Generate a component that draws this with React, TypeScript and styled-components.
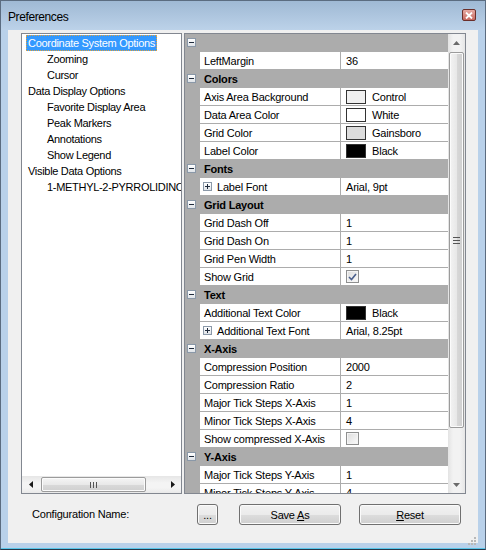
import React from "react";
import styled, { createGlobalStyle } from "styled-components";

type GridRow =
  | { kind: "cat"; name: string }
  | {
      kind: "prop";
      name: string;
      value?: string;
      swatch?: string;
      check?: boolean;
      expand?: boolean;
    };

const ROWS: GridRow[] = [
  { kind: "cat", name: "" },
  { kind: "prop", name: "LeftMargin", value: "36" },
  { kind: "cat", name: "Colors" },
  { kind: "prop", name: "Axis Area Background", swatch: "#f0f0f0", value: "Control" },
  { kind: "prop", name: "Data Area Color", swatch: "#ffffff", value: "White" },
  { kind: "prop", name: "Grid Color", swatch: "#dcdcdc", value: "Gainsboro" },
  { kind: "prop", name: "Label Color", swatch: "#000000", value: "Black" },
  { kind: "cat", name: "Fonts" },
  { kind: "prop", name: "Label Font", expand: true, value: "Arial, 9pt" },
  { kind: "cat", name: "Grid Layout" },
  { kind: "prop", name: "Grid Dash Off", value: "1" },
  { kind: "prop", name: "Grid Dash On", value: "1" },
  { kind: "prop", name: "Grid Pen Width", value: "1" },
  { kind: "prop", name: "Show Grid", check: true },
  { kind: "cat", name: "Text" },
  { kind: "prop", name: "Additional Text Color", swatch: "#000000", value: "Black" },
  { kind: "prop", name: "Additional Text Font", expand: true, value: "Arial, 8.25pt" },
  { kind: "cat", name: "X-Axis" },
  { kind: "prop", name: "Compression Position", value: "2000" },
  { kind: "prop", name: "Compression Ratio", value: "2" },
  { kind: "prop", name: "Major Tick Steps X-Axis", value: "1" },
  { kind: "prop", name: "Minor Tick Steps X-Axis", value: "4" },
  { kind: "prop", name: "Show compressed X-Axis", check: false },
  { kind: "cat", name: "Y-Axis" },
  { kind: "prop", name: "Major Tick Steps Y-Axis", value: "1" },
  { kind: "prop", name: "Minor Tick Steps Y-Axis", value: "4" },
];

const TREE = [
  { label: "Coordinate System Options", level: 0, selected: true },
  { label: "Zooming", level: 1 },
  { label: "Cursor", level: 1 },
  { label: "Data Display Options", level: 0 },
  { label: "Favorite Display Area", level: 1 },
  { label: "Peak Markers", level: 1 },
  { label: "Annotations", level: 1 },
  { label: "Show Legend", level: 1 },
  { label: "Visible Data Options", level: 0 },
  { label: "1-METHYL-2-PYRROLIDINONE", level: 1 },
];

const GlobalStyle = createGlobalStyle`
  html, body {
    margin: 0;
    padding: 0;
    background: #ffffff;
  }
  body {
    font-family: "Liberation Sans", Arial, sans-serif;
  }
  * {
    box-sizing: border-box;
  }
`;

const Window = styled.div`
  width: 486px;
  height: 550px;
  display: flex;
  flex-direction: column;
  border: 1px solid #5b6c80;
  border-bottom-color: #26384a;
  background: linear-gradient(to bottom, #9fb9d4 0px, #bcd2e9 29px, #b9d1ea 29px);
  padding: 0 7px 6px;
  box-shadow: inset 0 -1px 0 #58c6ea;
`;

const TitleBar = styled.div`
  height: 29px;
  display: flex;
  align-items: center;
  justify-content: space-between;
  padding-top: 2px;
`;

const Title = styled.span`
  font-size: 12px;
  letter-spacing: -0.4px;
  color: #000000;
`;

const CloseButton = styled.span`
  width: 14px;
  height: 12px;
  margin-right: 2px;
  margin-top: -3px;
  border: 1px solid #6b2f2a;
  border-radius: 2px;
  background: linear-gradient(to bottom, #e6aaa3, #c6685f);
  display: flex;
  align-items: center;
  justify-content: center;
`;

const Client = styled.div`
  flex: 1;
  display: flex;
  flex-direction: column;
  background: #f0f0f0;
`;

const Panes = styled.div`
  display: flex;
  gap: 2px;
  padding: 3px 0 0 13px;
`;

const Tree = styled.div`
  width: 161px;
  height: 461px;
  border: 1px solid #828790;
  background: #ffffff;
  display: flex;
  flex-direction: column;
`;

const TreeList = styled.div`
  flex: 1;
  overflow: hidden;
  padding-top: 1px;
  display: flex;
  flex-direction: column;
  align-items: flex-start;
`;

const TreeItem = styled.div<{ $level: number; $selected?: boolean }>`
  height: 16px;
  margin-left: ${(p) => 4 + p.$level * 19}px;
  padding: 0 1px;
  border: 1px dotted ${(p) => (p.$selected ? "#e2a13c" : "transparent")};
  background: ${(p) => (p.$selected ? "#3399ff" : "transparent")};
  color: ${(p) => (p.$selected ? "#ffffff" : "#000000")};
  font-size: 11px;
  letter-spacing: -0.3px;
  line-height: 14px;
  white-space: nowrap;
`;

const HScroll = styled.div`
  height: 17px;
  display: flex;
  align-items: stretch;
  background: linear-gradient(to bottom, #e6e6e6, #f4f4f4 40%, #f4f4f4 70%, #e9e9e9);
`;

const ArrowBox = styled.div<{ $w?: number; $h?: number }>`
  width: ${(p) => p.$w ?? 17}px;
  height: ${(p) => p.$h ?? 17}px;
  flex: none;
  display: flex;
  align-items: center;
  justify-content: center;
`;

const HTrack = styled.div`
  flex: 1;
  display: flex;
  align-items: center;
`;

const HThumb = styled.div`
  width: 105px;
  height: 15px;
  margin-left: 2px;
  border: 1px solid #9b9b9b;
  border-radius: 2px;
  background: linear-gradient(to bottom, #f5f5f5, #e9e9e9 50%, #d9d9d9 51%, #d0d0d0);
  box-shadow: inset 0 0 0 1px #fbfbfb;
  display: flex;
  align-items: center;
  justify-content: center;
`;

const PropertyGrid = styled.div`
  width: 282px;
  height: 461px;
  border: 1px solid #828790;
  background: #acacac;
  display: flex;
`;

const GridBody = styled.div`
  flex: 1;
  overflow: hidden;
  display: flex;
  flex-direction: column;
`;

const CategoryRow = styled.div`
  height: 18px;
  flex: none;
  display: flex;
  align-items: center;
  padding-bottom: 1px;
`;

const Margin = styled.div`
  width: 15px;
  height: 17px;
  flex: none;
  display: flex;
  align-items: center;
  padding-left: 2px;
`;

const CategoryName = styled.span`
  padding-left: 4px;
  font-size: 11px;
  font-weight: bold;
  letter-spacing: -0.2px;
  color: #000000;
`;

const PropRow = styled.div`
  height: 18px;
  flex: none;
  display: flex;
  padding-bottom: 1px;
`;

const LabelCell = styled.div<{ $expand?: boolean }>`
  width: 140px;
  flex: none;
  background: #ffffff;
  display: flex;
  align-items: center;
  gap: 5px;
  padding-left: ${(p) => (p.$expand ? 3 : 4)}px;
  font-size: 11px;
  letter-spacing: -0.2px;
  color: #000000;
  white-space: nowrap;
  overflow: hidden;
`;

const ValueCell = styled.div`
  flex: 1;
  margin-left: 1px;
  background: #ffffff;
  display: flex;
  align-items: center;
  padding-left: 5px;
  font-size: 11px;
  letter-spacing: -0.2px;
  color: #000000;
  white-space: nowrap;
  overflow: hidden;
`;

const Swatch = styled.span<{ $color: string }>`
  width: 20px;
  height: 14px;
  margin-right: 6px;
  border: 1px solid #333333;
  background: ${(p) => p.$color};
  flex: none;
`;

const CheckBox = styled.span`
  width: 13px;
  height: 13px;
  border: 1px solid #8e8f8f;
  background: linear-gradient(135deg, #dcdcdc, #fbfbfb);
  box-shadow: inset 0 0 0 1px #f4f4f4;
  display: flex;
  align-items: center;
  justify-content: center;
  flex: none;
`;

const ExpandBox = styled.span<{ $plus?: boolean }>`
  position: relative;
  width: 9px;
  height: 9px;
  flex: none;
  border: 1px solid #8a98a8;
  background: linear-gradient(to bottom, #ffffff, #dfe3e8);

  &::before {
    content: "";
    position: absolute;
    left: 1px;
    top: 3px;
    width: 5px;
    height: 1px;
    background: #1f2b3c;
  }

  &::after {
    content: "";
    display: ${(p) => (p.$plus ? "block" : "none")};
    position: absolute;
    left: 3px;
    top: 1px;
    width: 1px;
    height: 5px;
    background: #1f2b3c;
  }
`;

const VScroll = styled.div`
  width: 17px;
  flex: none;
  display: flex;
  flex-direction: column;
  background: linear-gradient(to right, #e3e3e3, #f2f2f2 30%, #f2f2f2 70%, #e6e6e6);
`;

const VTrack = styled.div`
  flex: 1;
  display: flex;
  flex-direction: column;
  align-items: center;
`;

const VThumb = styled.div`
  width: 15px;
  height: 376px;
  margin-top: 1px;
  border: 1px solid #9b9b9b;
  border-radius: 2px;
  background: linear-gradient(to right, #f3f3f3, #e8e8e8 50%, #d8d8d8 51%, #cfcfcf);
  box-shadow: inset 0 0 0 1px #fbfbfb;
  display: flex;
  align-items: center;
  justify-content: center;
`;

const Footer = styled.div`
  flex: 1;
  position: relative;
  display: flex;
  align-items: flex-start;
  padding: 10px 0 0 24px;
`;

const FooterLabel = styled.span`
  width: 165px;
  line-height: 20px;
  font-size: 11px;
  letter-spacing: -0.2px;
  color: #000000;
`;

const Button = styled.button<{ $w: number; $gap?: number }>`
  width: ${(p) => p.$w}px;
  height: 21px;
  margin-left: ${(p) => p.$gap ?? 0}px;
  padding: 0;
  border: 1px solid #707070;
  border-radius: 3px;
  background: linear-gradient(to bottom, #f2f2f2 0%, #ebebeb 50%, #dddddd 51%, #cfcfcf 100%);
  box-shadow: inset 0 0 0 1px #fbfbfb;
  font-family: "Liberation Sans", Arial, sans-serif;
  font-size: 11px;
  letter-spacing: -0.2px;
  color: #000000;
`;

const Grip = styled.span`
  position: absolute;
  right: 2px;
  bottom: 2px;
  width: 10px;
  height: 10px;
`;

const Arrow = ({ dir, color = "#404040" }: { dir: "up" | "down" | "left" | "right"; color?: string }) => {
  const pts = {
    up: "0,4 3.5,0 7,4",
    down: "0,0 3.5,4 7,0",
    left: "4,0 0,3.5 4,7",
    right: "0,0 4,3.5 0,7",
  }[dir];
  const vertical = dir === "up" || dir === "down";
  return (
    <svg width={vertical ? 7 : 4} height={vertical ? 4 : 7} viewBox={vertical ? "0 0 7 4" : "0 0 4 7"}>
      <polygon points={pts} fill={color} />
    </svg>
  );
};

export default function App() {
  return (
    <>
      <GlobalStyle />
      <Window>
        <TitleBar>
          <Title>Preferences</Title>
          <CloseButton>
            <svg width="8" height="7" viewBox="0 0 8 7">
              <path d="M1 0.5 L7 6.5 M7 0.5 L1 6.5" stroke="#ffffff" strokeWidth="1.8" />
            </svg>
          </CloseButton>
        </TitleBar>
        <Client>
          <Panes>
            <Tree>
              <TreeList>
                {TREE.map((t) => (
                  <TreeItem key={t.label} $level={t.level} $selected={t.selected}>
                    {t.label}
                  </TreeItem>
                ))}
              </TreeList>
              <HScroll>
                <ArrowBox>
                  <Arrow dir="left" color="#1a1a1a" />
                </ArrowBox>
                <HTrack>
                  <HThumb>
                    <svg width="7" height="6" viewBox="0 0 7 6">
                      <path d="M0.5 0 V6 M3.5 0 V6 M6.5 0 V6" stroke="#555555" strokeWidth="1" />
                    </svg>
                  </HThumb>
                </HTrack>
                <ArrowBox>
                  <Arrow dir="right" color="#1a1a1a" />
                </ArrowBox>
              </HScroll>
            </Tree>
            <PropertyGrid>
              <GridBody>
                {ROWS.map((r, i) =>
                  r.kind === "cat" ? (
                    <CategoryRow key={i}>
                      <Margin>
                        <ExpandBox />
                      </Margin>
                      <CategoryName>{r.name}</CategoryName>
                    </CategoryRow>
                  ) : (
                    <PropRow key={i}>
                      <Margin />
                      <LabelCell $expand={r.expand}>
                        {r.expand && <ExpandBox $plus />}
                        {r.name}
                      </LabelCell>
                      <ValueCell>
                        {r.swatch && <Swatch $color={r.swatch} />}
                        {r.check !== undefined && (
                          <CheckBox>
                            {r.check && (
                              <svg width="9" height="8" viewBox="0 0 9 8">
                                <path d="M1 4 L3.5 6.5 L8 1" fill="none" stroke="#4a5f8c" strokeWidth="1.6" />
                              </svg>
                            )}
                          </CheckBox>
                        )}
                        {r.value}
                      </ValueCell>
                    </PropRow>
                  )
                )}
              </GridBody>
              <VScroll>
                <ArrowBox>
                  <Arrow dir="up" color="#6a6a6a" />
                </ArrowBox>
                <VTrack>
                  <VThumb>
                    <svg width="7" height="7" viewBox="0 0 7 7">
                      <path d="M0 0.5 H7 M0 3.5 H7 M0 6.5 H7" stroke="#555555" strokeWidth="1" />
                    </svg>
                  </VThumb>
                </VTrack>
                <ArrowBox>
                  <Arrow dir="down" color="#6a6a6a" />
                </ArrowBox>
              </VScroll>
            </PropertyGrid>
          </Panes>
          <Footer>
            <FooterLabel>Configuration Name:</FooterLabel>
            <Button $w={21}>...</Button>
            <Button $w={102} $gap={21}>
              Save <u>A</u>s
            </Button>
            <Button $w={102} $gap={18}>
              <u>R</u>eset
            </Button>
            <Grip>
              <svg width="10" height="10" viewBox="0 0 10 10">
                <g fill="#b8b8b8">
                  <rect x="8" y="2" width="2" height="2" />
                  <rect x="5" y="5" width="2" height="2" />
                  <rect x="8" y="5" width="2" height="2" />
                  <rect x="2" y="8" width="2" height="2" />
                  <rect x="5" y="8" width="2" height="2" />
                  <rect x="8" y="8" width="2" height="2" />
                </g>
              </svg>
            </Grip>
          </Footer>
        </Client>
      </Window>
    </>
  );
}
